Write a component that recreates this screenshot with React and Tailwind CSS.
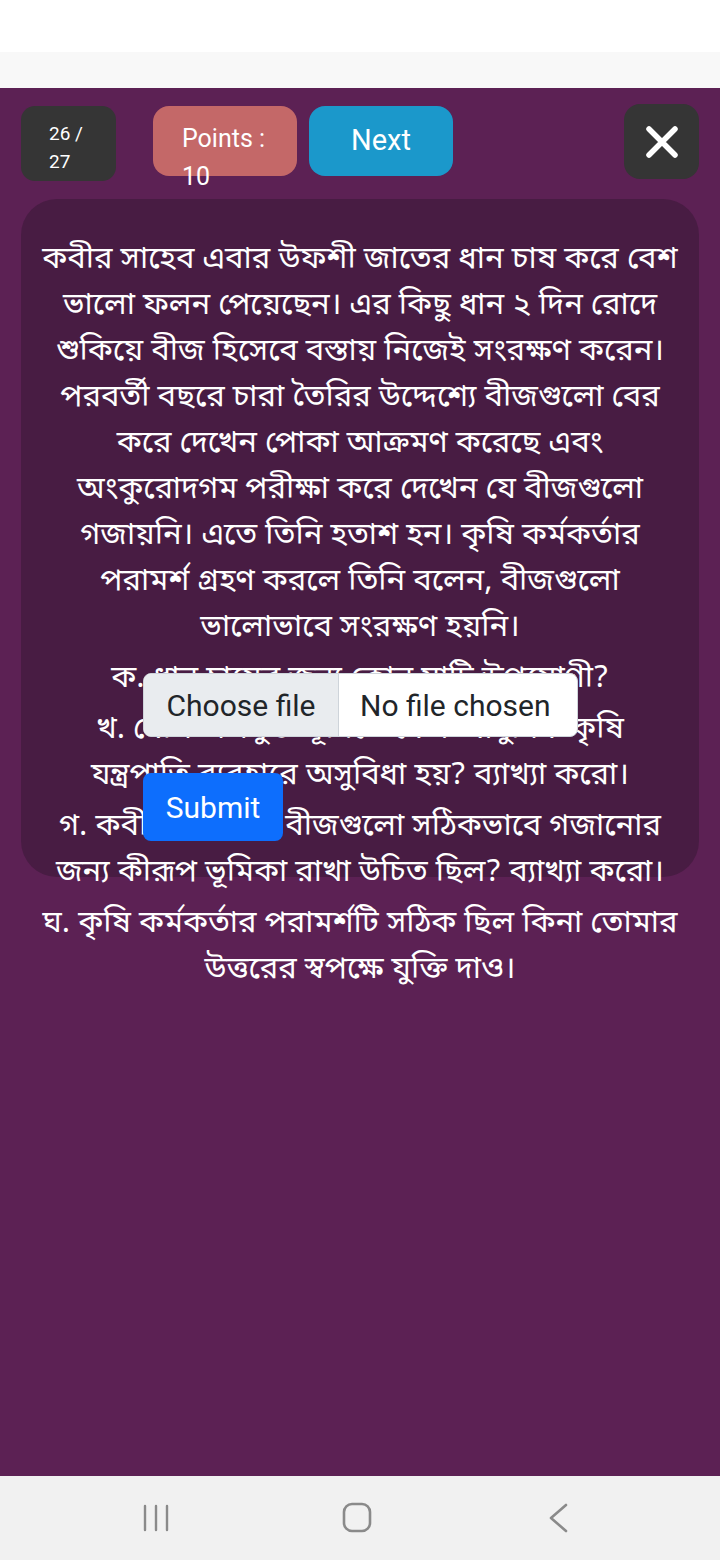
import React from 'react';

const bn = { fontFamily: '"Noto Sans Bengali", "Noto Sans", sans-serif' };
const ui = { fontFamily: 'Roboto, "Liberation Sans", sans-serif' };

// Lines of the case text, broken as the card shows them
const story = [
  'কবীর সাহেব এবার উফশী জাতের ধান চাষ করে বেশ',
  'ভালো ফলন পেয়েছেন। এর কিছু ধান ২ দিন রোদে',
  'শুকিয়ে বীজ হিসেবে বস্তায় নিজেই সংরক্ষণ করেন।',
  'পরবর্তী বছরে চারা তৈরির উদ্দেশ্যে বীজগুলো বের',
  'করে দেখেন পোকা আক্রমণ করেছে এবং',
  'অংকুরোদগম পরীক্ষা করে দেখেন যে বীজগুলো',
  'গজায়নি। এতে তিনি হতাশ হন। কৃষি কর্মকর্তার',
  'পরামর্শ গ্রহণ করলে তিনি বলেন, বীজগুলো',
  'ভালোভাবে সংরক্ষণ হয়নি।',
];

const questions = [
  ['ক. ধান চাষের জন্য কোন মাটি উপযোগী?'],
  ['খ. বেশি ঢালযুক্ত ভূমিতে কেন আধুনিক কৃষি', 'যন্ত্রপাতি ব্যবহারে অসুবিধা হয়? ব্যাখ্যা করো।'],
  ['গ. কবীর সাহেবের বীজগুলো সঠিকভাবে গজানোর', 'জন্য কীরূপ ভূমিকা রাখা উচিত ছিল? ব্যাখ্যা করো।'],
  ['ঘ. কৃষি কর্মকর্তার পরামর্শটি সঠিক ছিল কিনা তোমার', 'উত্তরের স্বপক্ষে যুক্তি দাও।'],
];

const App = () => {
  return (
    <div className="w-[720px] h-[1560px] flex flex-col overflow-hidden" style={ui}>
      <div className="h-[52px] bg-white" />
      <div className="h-[36px] bg-[#f8f8f8]" />

      <div className="flex-1 bg-[#5c2154] px-[21px] pt-[16px]">
        {/* top bar */}
        <div className="flex items-start">
          <div className="mt-[2px] w-[95px] h-[75px] rounded-[14px] bg-[#353535] text-white text-[19px] leading-[28px] pl-[28px] pr-[16px] pt-[14px]">
            26 / 27
          </div>
          <div className="ml-[37px] mt-[2px] w-[144px] h-[70px] rounded-[16px] bg-[#c46868] text-white text-[25px] leading-[38px] pl-[29px] pr-[20px] pt-[14px]">
            Points : 10
          </div>
          <button className="ml-[12px] mt-[2px] w-[144px] h-[70px] rounded-[16px] bg-[#1b98cb] text-white text-[29px] flex items-center justify-center">
            Next
          </button>
          <button className="ml-auto w-[75px] h-[75px] rounded-[16px] bg-[#353535] flex items-center justify-center">
            <svg width="34" height="34" viewBox="0 0 34 34" fill="none" stroke="white" strokeWidth="5.5" strokeLinecap="round">
              <path d="M4 4L30 30M30 4L4 30" />
            </svg>
          </button>
        </div>

        {/* question card */}
        <div className="relative mt-[18px] h-[678px] rounded-[36px] bg-[#481c43] px-[4px] pt-[39px]">
          <div className="text-white text-center text-[31px] leading-[46px]" style={bn}>
            {story.map((l, i) => (
              <div key={i} className="whitespace-nowrap">{l}</div>
            ))}
            {questions.map((q, i) => (
              <div key={i} className="mt-[5px]">
                {q.map((l, j) => (
                  <div key={j} className="whitespace-nowrap">{l}</div>
                ))}
              </div>
            ))}
          </div>

          {/* answer form sits over the text */}
          <div className="absolute left-[122px] top-[474px] w-[435px] h-[64px] rounded-[8px] bg-white border border-[#ced4da] flex overflow-hidden text-[30px] text-[#212529]">
            <div className="w-[195px] bg-[#e9ecef] border-r border-[#ced4da] flex items-center justify-center">Choose file</div>
            <div className="flex-1 flex items-center pl-[21px]">No file chosen</div>
          </div>
          <button className="absolute left-[122px] top-[574px] w-[140px] h-[68px] rounded-[8px] bg-[#0d6efd] text-white text-[30px] flex items-center justify-center">
            Submit
          </button>
        </div>
      </div>

      {/* android nav */}
      <div className="h-[84px] bg-[#f1f1f1] flex items-center pl-[142px]">
        <svg width="28" height="30" viewBox="0 0 28 30" fill="none" stroke="#8a8a8a" strokeWidth="2.4" strokeLinecap="round">
          <path d="M3 3V27M14 3V27M25 3V27" />
        </svg>
        <svg width="30" height="32" viewBox="0 0 30 32" fill="none" stroke="#8a8a8a" strokeWidth="2.6" className="ml-[172px]">
          <rect x="2" y="2" width="26" height="27" rx="8" />
        </svg>
        <svg width="21" height="30" viewBox="0 0 21 30" fill="none" stroke="#8a8a8a" strokeWidth="2.6" strokeLinecap="round" strokeLinejoin="round" className="ml-[176px]">
          <path d="M18 2L3 15L18 28" />
        </svg>
      </div>
    </div>
  );
};

export default App;
